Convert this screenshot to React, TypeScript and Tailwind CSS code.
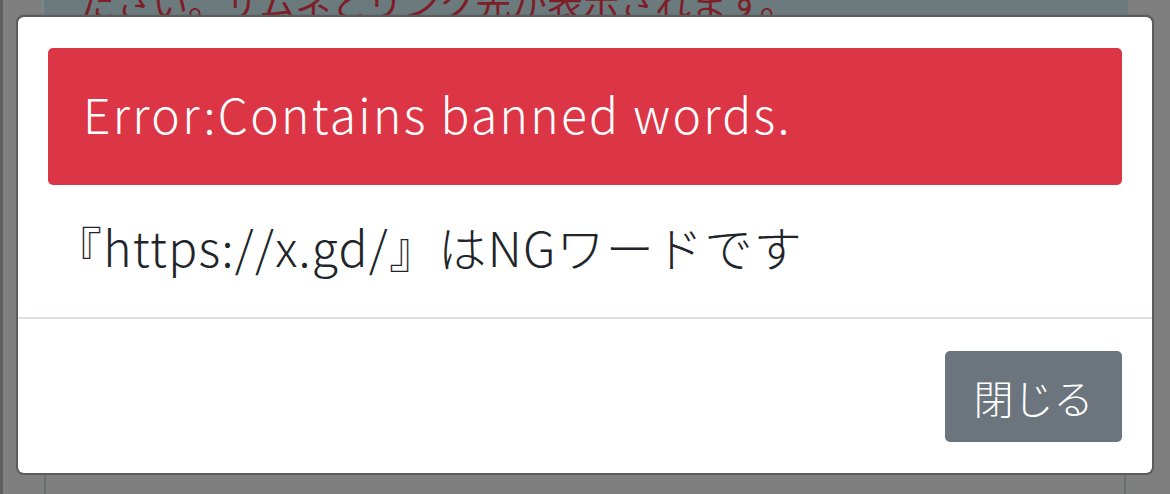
const font = { fontFamily: '"Noto Sans CJK JP", "Noto Sans", sans-serif' };

function BackgroundPage() {
  return (
    <div className="flex h-full w-full">
      <div className="w-[3px] h-full bg-[#5f5f5f]" />
      <div className="w-[39px] h-full" />
      <div className="flex flex-col w-[1086px] h-full">
        <div className="h-[17px] bg-[#6b7b7d] border-l-2 border-[#78898b] overflow-hidden relative">
          <p className="absolute left-[36px] bottom-[-4px] text-[36px] leading-[40px] text-[#7d1e28] whitespace-nowrap">
            ださい。サムネとリンク先が表示されます。
          </p>
        </div>
        <div className="flex-1 mx-[2px] border-x-2 border-[#6a6f72]" />
      </div>
    </div>
  );
}

export default function App() {
  return (
    <div className="relative w-[1170px] h-[494px] overflow-hidden bg-[#7f7f7f]" style={font}>
      <BackgroundPage />

      {/* modal */}
      <div className="absolute left-[18px] top-[17px] w-[1134px] h-[456px] bg-white rounded-[6px] shadow-[0_0_0_2px_#5c5c5c,0_-1px_2px_1px_#5c5c5c] flex flex-col">
        <div className="px-[30px] pt-[31px] pb-[35px]">
          <div className="h-[137px] flex items-center px-[35px] pb-[8px] bg-[#dc3545] rounded-[5px] text-white text-[48px] tracking-[2.3px] font-light">
            Error:Contains banned words.
          </div>
          <p className="mt-[25px] pl-[6px] text-[48px] leading-[72px] tracking-[1.3px] text-[#212529] font-light">
            『https://x.gd/』はNGワードです
          </p>
        </div>
        <div className="border-t-2 border-[#dee2e6] flex justify-end px-[30px] pt-[32px]">
          <button className="w-[177px] h-[91px] bg-[#6c757d] rounded-[5px] text-white text-[40px] font-light">
            閉じる
          </button>
        </div>
      </div>
    </div>
  );
}
